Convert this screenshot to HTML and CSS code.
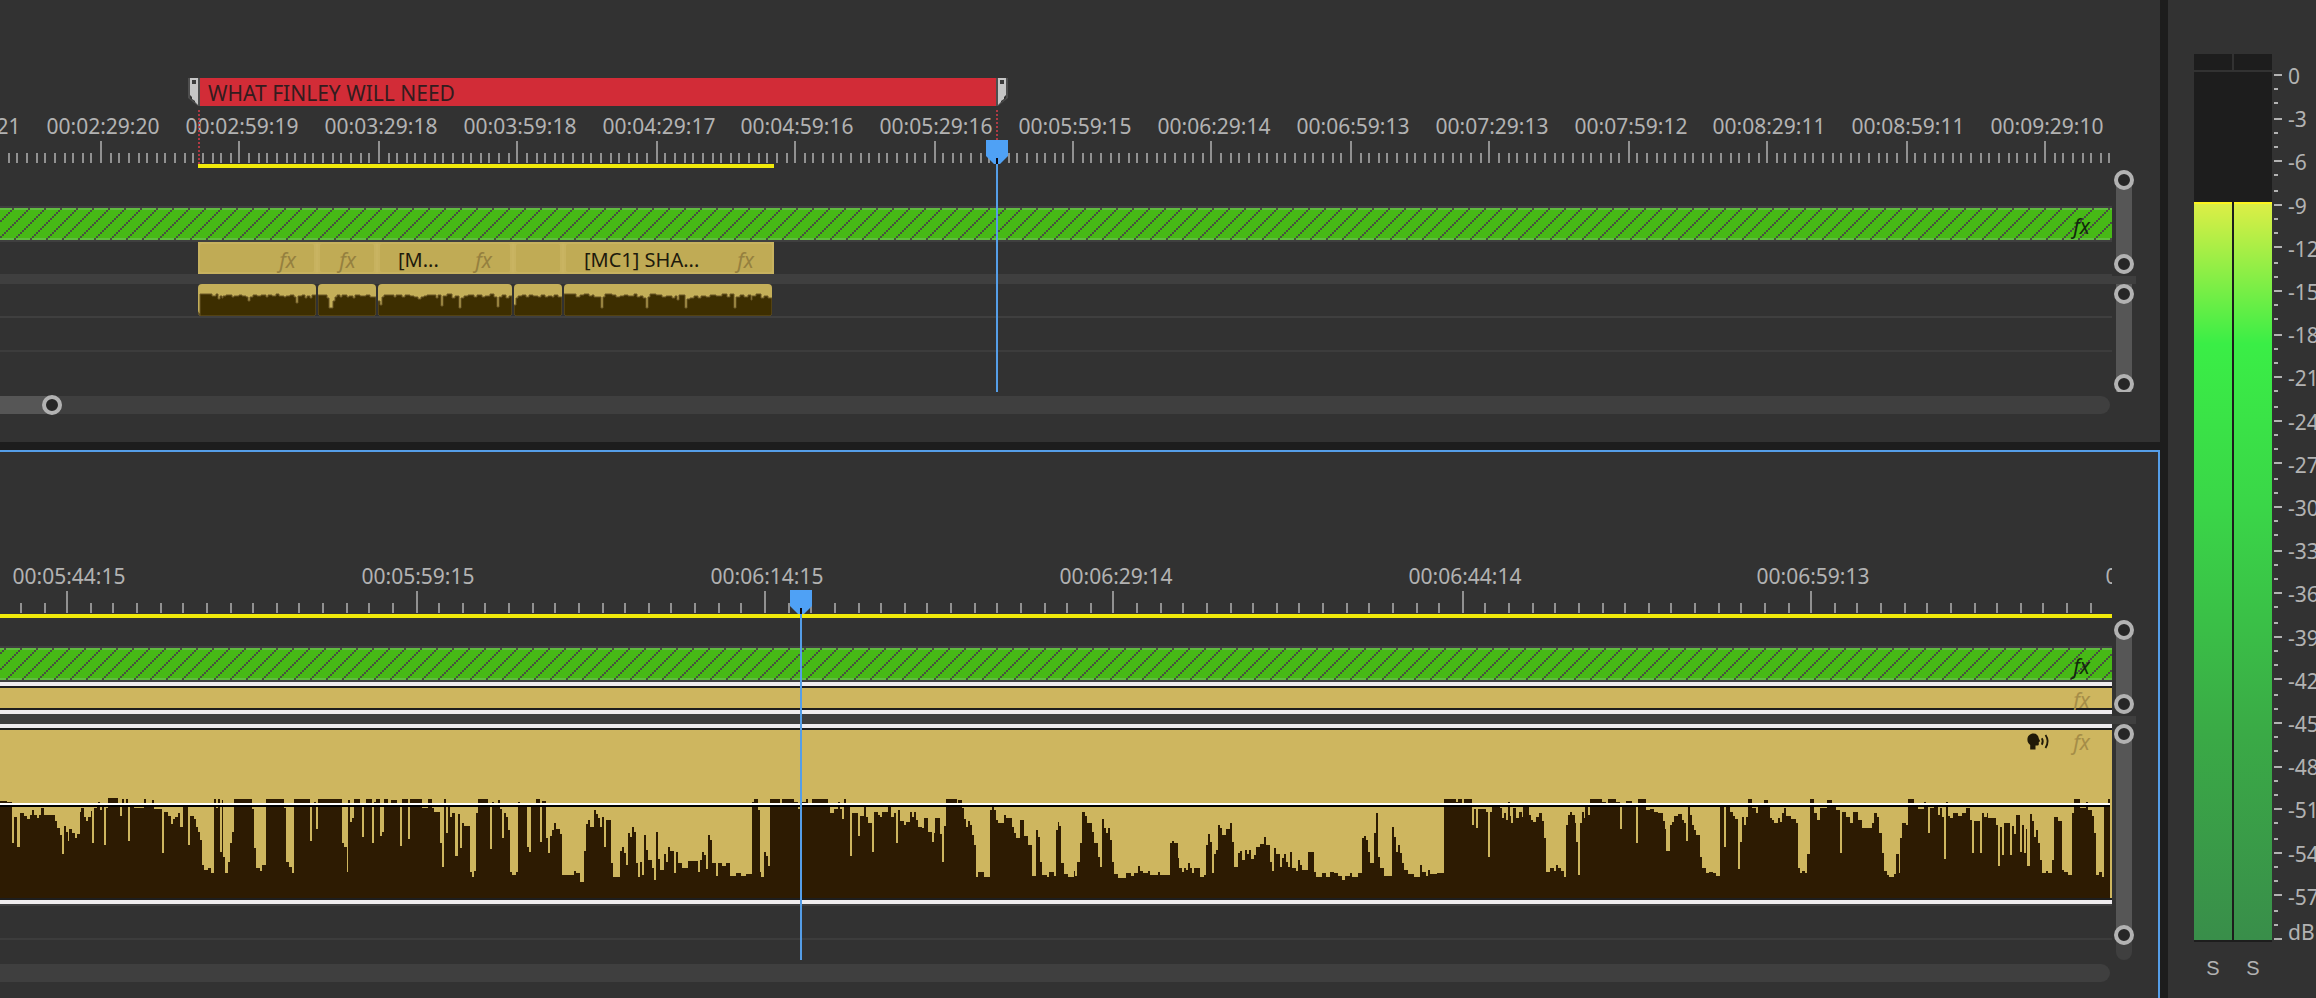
FILE: index.html
```html
<!DOCTYPE html>
<html lang="en">

<head>
    <meta charset="UTF-8">
    <meta name="viewport" content="width=device-width, initial-scale=1.0">
    <title>Timeline</title>
    <link rel="stylesheet" href="styles.css">
</head>

<body>
    <!-- shared hatch for the adjustment layers -->
    <svg class="defs" width="0" height="0" aria-hidden="true">
        <defs>
            <pattern id="hatch-source" width="16" height="32" patternUnits="userSpaceOnUse" x="12">
                <path d="M0 0h2v2h-2zM14 2h2v2h-2zM12 4h2v2h-2zM10 6h2v2h-2zM8 8h2v2h-2zM6 10h2v2h-2zM4 12h2v2h-2zM2 14h2v2h-2zM0 16h2v2h-2zM14 18h2v2h-2zM12 20h2v2h-2zM10 22h2v2h-2zM8 24h2v2h-2zM6 26h2v2h-2zM4 28h2v2h-2zM2 30h2v2h-2z" />
            </pattern>
            <pattern id="hatch-edit" width="16" height="32" patternUnits="userSpaceOnUse" x="4">
                <path d="M0 0h2v2h-2zM14 2h2v2h-2zM12 4h2v2h-2zM10 6h2v2h-2zM8 8h2v2h-2zM6 10h2v2h-2zM4 12h2v2h-2zM2 14h2v2h-2zM0 16h2v2h-2zM14 18h2v2h-2zM12 20h2v2h-2zM10 22h2v2h-2zM8 24h2v2h-2zM6 26h2v2h-2zM4 28h2v2h-2zM2 30h2v2h-2z" />
            </pattern>
        </defs>
    </svg>

    <main class="workspace">
        <div class="timelines">

            <!-- Source timeline -->
            <section class="panel">
                <div class="lanes">
                    <div class="marker-lane">
                        <svg class="marker-end" viewBox="0 0 12 28">
                            <path class="edge" d="M0 0h2v20l8 7v-27h2v28h-2l-10-8z" />
                            <path class="flag" d="M2 0h8v27l-3-3v-1l-3-2v-2l-2-2z" />
                            <path class="hole" d="M4 2h4v4h-4z" />
                        </svg>
                        <div class="marker">WHAT FINLEY WILL NEED</div>
                        <svg class="marker-end right" viewBox="0 0 12 28">
                            <path class="edge" d="M0 0h2v20l8 7v-27h2v28h-2l-10-8z" />
                            <path class="flag" d="M2 0h8v27l-3-3v-1l-3-2v-2l-2-2z" />
                            <path class="hole" d="M4 2h4v4h-4z" />
                        </svg>
                        <i class="marker-drop in"></i>
                        <i class="marker-drop out"></i>
                    </div>
                    <div class="ruler" id="source-ruler"></div>
                    <div class="work-area part"></div>

                    <div class="video-tracks">
                        <div class="adjustment">
                            <svg width="100%" height="32"><rect width="100%" height="32" fill="url(#hatch-source)" /></svg>
                            <span class="fx">fx</span>
                        </div>
                        <div class="clips">
                            <div class="clip c1"><span class="fx">fx</span></div>
                            <div class="clip c2"><span class="fx">fx</span></div>
                            <div class="clip c3"><span class="name">[M...</span><span class="fx">fx</span></div>
                            <div class="clip c4"></div>
                            <div class="clip c5"><span class="name">[MC1] SHA...</span><span class="fx">fx</span></div>
                        </div>
                    </div>
                    <div class="splitter"></div>
                    <div class="clips audio">
                        <div class="clip c1">
                            <svg viewBox="0 0 118 32">
                                <path d="M2 32V10H14V12H18V10H20V15H22V12H24V14H25V12H28V11H34V13H36V12H41V11H44V12H48V13H50V17H52V13H55V11H59V12H63V11H68V13H70V11H74V12H78V10H81V12H86V13H88V12H92V11H96V13H98V19H100V12H104V11H107V14H109V12H112V14H114V11H118V32z" />
                            </svg>
                        </div>
                        <div class="clip c2">
                            <svg viewBox="0 0 58 32">
                                <path d="M0 32V11H9V14H11V24H15V17H17V13H19V11H22V13H24V11H29V13H31V12H35V14H37V11H42V12H48V11H52V13H58V32z" />
                            </svg>
                        </div>
                        <div class="clip c3">
                            <svg viewBox="0 0 134 32">
                                <path d="M0 32V17H2V21H4V13H6V11H16V13H18V11H24V13H27V11H32V12H36V13H40V15H43V13H46V12H49V11H58V14H60V11H63V22H65V12H69V10H74V14H77V12H81V24H83V14H86V12H90V11H96V13H99V11H104V13H107V12H112V10H116V13H119V23H121V13H124V11H128V14H131V12H134V32z" />
                            </svg>
                        </div>
                        <div class="clip c4">
                            <svg viewBox="0 0 48 32">
                                <path d="M0 32V21H2V14H4V12H8V11H12V13H15V11H19V12H24V13H27V11H31V13H34V12H38V13H40V11H44V13H48V32z" />
                            </svg>
                        </div>
                        <div class="clip c5">
                            <svg viewBox="0 0 208 32">
                                <path d="M0 32V10H12V13H16V11H20V10H25V12H28V11H30V13H37V24H39V13H41V10H48V11H52V13H56V12H60V11H64V12H70V10H73V13H76V12H79V14H82V24H84V13H86V10H92V11H98V13H102V12H108V14H111V12H113V16H115V11H121V24H123V15H126V14H130V12H134V14H137V12H142V13H146V11H152V12H158V10H163V13H166V10H170V24H172V13H176V11H180V13H184V11H187V16H188V12H192V10H197V14H200V12H204V14H208V32z" />
                            </svg>
                        </div>
                    </div>
                    <div class="empty-track"></div>

                    <div class="playhead at-source">
                        <svg viewBox="0 0 22 24"><path d="M0 0H22V16L14 24H8L0 16z" /><path class="slot" d="M10 18h2v6h-2z" /></svg>
                    </div>
                </div>
                <div class="zoom-bars">
                    <div class="vbar"><button class="knob" aria-label="Video tracks top"></button><button class="knob" aria-label="Video tracks bottom"></button></div>
                    <div class="splitter"></div>
                    <div class="vbar cut"><button class="knob" aria-label="Audio tracks top"></button><button class="knob" aria-label="Audio tracks bottom"></button></div>
                </div>
                <div class="hbar"><div class="thumb"><button class="knob" aria-label="Zoom timeline"></button></div></div>
            </section>

            <!-- Sequence timeline -->
            <section class="panel active">
                <div class="lanes">
                    <div class="ruler" id="edit-ruler"></div>
                    <div class="work-area"></div>

                    <div class="video-tracks short">
                        <div class="adjustment">
                            <svg width="100%" height="32"><rect width="100%" height="32" fill="url(#hatch-edit)" /></svg>
                            <span class="fx">fx</span>
                        </div>
                        <div class="selected video"><span class="fx">fx</span></div>
                    </div>
                    <div class="splitter"></div>
                    <div class="selected sound">
                        <svg class="wave" viewBox="0 0 2112 168" preserveAspectRatio="none" shape-rendering="crispEdges">
                            <path transform="translate(0 -180) scale(.4975 .3333)" d="M0 1044V752H14V757H24V880H28V800H34V890H40V790H48V798H55V808H60V795H65V780H68V795H74V803H78V795H82V775H88V795H110V812H115V835H120V855H124V912H129V828H133V845H136V872H139V838H144V850H150V865H155V853H160V785H163V775H168V800H172V812H176V800H182V782H185V880H189V775H194V765H197V757H201V780H205V766H209V886H213V775H217V745H238V765H241V797H245V748H249V765H253V748H257V872H261V770H270V774H289V748H293V770H306V750H310V778H325V910H330V785H338V797H343V822H347V808H351V800H358V788H362V830H367V760H378V886H382V797H390V808H394V830H398V845H402V870H406V945H411V960H418V955H424V968H430V748H434V775H438V748H442V905H446V750H449V920H453V970H458V935H462V880H466V845H470V746H507V778H511V895H515V955H523V962H527V946H535V746H571V775H575V935H581V950H586V970H591V746H623V872H627V765H631V757H635V838H639V746H688V880H692V890H697V965H700V750H704V815H708V805H712V746H724V765H728V860H732V770H736V746H748V880H752V757H756V746H764V857H768V845H772V746H780V765H785V750H797V770H804V888H808V746H820V868H824V746H848V775H860V748H868V775H872V785H884V880H889V952H893V748H897V850H901V772H905V800H909V788H915V917H921V793H925V893H929V820H933V828H944V965H948V980H953V962H957V790H961V748H980V765H985V898H989V755H993V768H1001V750H1005V778H1009V863H1013V790H1017V800H1021V840H1025V965H1029V976H1037V965H1041V757H1045V772H1060V890H1064V905H1068V765H1077V748H1085V875H1089V752H1097V865H1101V910H1105V857H1109V840H1113V820H1118V838H1125V853H1130V975H1153V962H1158V970H1166V995H1174V903H1178V822H1182V810H1186V830H1194V780H1198V793H1202V803H1206V832H1210V800H1214V892H1218V810H1229V940H1233V980H1246V903H1250V890H1254V910H1258V945H1262V850H1266V860H1270V830H1274V845H1279V940H1283V980H1287V935H1291V975H1295V855H1299V900H1303V930H1311V955H1315V990H1319V847H1323V928H1327V960H1335V912H1339V935H1343V890H1347V903H1355V968H1359V905H1363V940H1371V955H1383V932H1403V965H1407V930H1411V907H1415V915H1419V958H1423V855H1427V870H1431V938H1439V977H1443V938H1451V948H1459V940H1467V977H1480V968H1490V978H1500V972H1511V757H1516V746H1524V780H1528V1044z" />
                            <path transform="translate(760 -180) scale(.4975 .3333)" d="M0 1044V965H3V980H8V907H12V917H16V947H20V746H40V765H44V746H68V757H76V778H80V757H92V746H96V770H105V746H136V765H141V790H149V778H156V757H160V778H164V808H169V746H173V772H181V917H185V790H197V857H201V797H209V768H213V800H217V820H225V905H229V785H237V795H241V802H245V785H257V772H264V800H269V790H274V880H277V780H281V812H289V825H294V815H302V785H306V800H309V785H313V810H317V830H325V835H330V805H337V845H345V875H349V850H352V803H362V853H365V935H370V827H374V746H395V765H398V750H406V775H410V808H415V830H418V812H422V825H427V855H430V885H434V980H439V965H450V980H462V780H466V772H470V780H474V810H478V820H490V795H494V805H506V830H510V850H514V863H522V810H530V857H538V885H546V978H554V840H558V860H562V935H567V975H577V980H580V965H590V978H595V840H598V815H602V828H606V940H611V972H620V980H631V962H634V978H638V935H643V880H647V785H654V797H658V820H668V845H671V880H679V922H683V952H687V808H691V835H695V850H699V835H703V870H707V935H711V972H720V984H735V968H745V978H752V968H760V948H764V962H770V970H779V962H784V975H800V965H805V975H824V880H828V872H832V880H840V925H843V955H848V965H852V955H857V960H861V940H865V955H869V970H873V955H885V980H893V975H897V885H901V853H905V875H909V970H913V912H917V900H921V825H925V835H929V855H937V838H945V818H949V875H953V950H961V910H965V903H969V930H974V900H978V912H982V900H986V928H993V915H997V890H1005V882H1013V860H1017V885H1025V935H1029V962H1033V895H1037V912H1045V950H1049V925H1053V912H1057V935H1061V950H1065V905H1069V955H1077V962H1081V930H1086V945H1090V960H1102V905H1114V965H1118V980H1130V968H1138V980H1146V965H1154V970H1162V978H1170V990H1175V978H1185V970H1190V980H1202V968H1210V865H1214V857H1218V870H1222V905H1226V938H1234V850H1238V790H1242V922H1246V955H1254V978H1270V830H1274V860H1278V905H1282V885H1286V910H1291V940H1295V960H1303V972H1315V980H1327V945H1331V965H1339V978H1343V960H1347V972H1360V968H1375V746H1399V757H1403V746H1411V760H1415V746H1431V825H1435V778H1439V835H1443V778H1460V785H1464V922H1467V785H1471V765H1487V1044z" />
                            <path transform="translate(1500 -180) scale(.4337 .3333)" d="M0 1044V775H5V805H10V790H14V810H18V757H22V797H26V820H30V775H38V803H43V785H50V800H54V772H68V795H72V810H77V815H82V800H90V790H96V812H101V865H105V965H115V955H124V962H129V945H133V955H140V962H147V980H152V825H156V795H161V785H166V795H173V820H176V875H180V976H184V820H188V785H193V803H197V768H202V795H207V746H235V757H245V770H249V746H268V757H277V838H281V765H290V752H304V770H313V880H318V746H337V780H345V778H355V785H364V790H375V812H380V838H383V903H392V825H397V815H402V797H410V793H419V810H424V820H429V873H433V770H438V795H442V825H447V840H452V855H461V920H466V955H475V968H482V965H490V970H498V978H507V770H517V890H521V770H530V785H537V797H542V808H549V958H553V877H558V800H563V825H567V800H572V746H581V775H590V790H595V772H608V750H617V768H622V803H627V810H632V820H640V805H645V815H650V790H655V775H660V797H670V808H682V820H686V955H691V970H697V962H703V970H709V912H715V746H724V790H730V810H738V775H755V750H766V765H775V780H784V910H788V785H797V800H807V820H815V785H825V810H835V835H857V820H862V790H870V800H875V850H880V910H885V962H893V975H898V982H908V972H914V912H919V968H922V865H928V818H935V825H940V746H954V770H963V778H977V757H982V770H987V850H992V775H1000V768H1010V795H1014V775H1019V800H1024V928H1028V755H1033V797H1037V803H1045V790H1056V797H1065V790H1074V775H1083V810H1088V908H1093V812H1107V910H1111V790H1116V800H1122V790H1125V803H1143V825H1148V948H1152V830H1157V915H1162V818H1176V915H1180V828H1185V853H1190V795H1199V905H1204V825H1208V910H1213V838H1215V948H1222V793H1227V812H1231V860H1236V840H1241V878H1245V930H1250V970H1258V962H1264V970H1273V930H1277V800H1287V812H1296V960H1300V965H1310V975H1319V790H1324V746H1337V775H1351V755H1356V780H1365V797H1370V850H1374V975H1380V965H1387V980H1393V770H1402V746H1407V1044z" />
                            <!-- gain line -->
                            <path class="gain" d="M0 73H2110V75H0z" />
                            <path class="gain-shadow" d="M0 75H2110V77H0z" />
                        </svg>
                        <div class="badges">
                            <svg class="voice" viewBox="0 0 24 18">
                                <path d="M6.500 0.500C9.500 .5 11.500 2.500 11.800 5.500L13.200 8.200L11.800 9V11.500Q11.600 12.600 10.300 12.500L8.500 12.600V16.500H3.200V12C1.200 10.600 .4 8.800 .4 6.500C.4 3 3 .5 6.500 .5z" />
                                <path class="sound-line" d="M14.800 5.200Q16.800 8.200 14.800 11.800M18.500 2Q22.800 8 18.500 15" />
                            </svg>
                            <span class="fx">fx</span>
                        </div>
                    </div>
                    <div class="empty-track tall"></div>

                    <div class="playhead at-edit">
                        <svg viewBox="0 0 22 24"><path d="M0 0H22V16L14 24H8L0 16z" /><path class="slot" d="M10 18h2v6h-2z" /></svg>
                    </div>
                </div>
                <div class="zoom-bars">
                    <div class="vbar"><button class="knob" aria-label="Video tracks top"></button><button class="knob" aria-label="Video tracks bottom"></button></div>
                    <div class="splitter"></div>
                    <div class="vbar tail"><button class="knob" aria-label="Audio tracks top"></button><button class="knob" aria-label="Audio tracks bottom"></button></div>
                    <div class="vbar-end"></div>
                </div>
                <div class="hbar"></div>
            </section>
        </div>

        <!-- Audio meters -->
        <aside class="meters">
            <div class="meter-body">
                <div class="channels">
                    <div class="peaks"><i></i><i></i></div>
                    <div class="levels">
                        <div class="level" style="height: 85%"></div>
                        <div class="level" style="height: 85%"></div>
                    </div>
                </div>
                <svg class="db-ticks" id="db-ticks" viewBox="0 0 8 866"></svg>
                <ul class="db-scale" id="db-scale"></ul>
            </div>
            <div class="solo">
                <button aria-label="Solo left">S</button>
                <button aria-label="Solo right">S</button>
            </div>
        </aside>
    </main>

    <script>
        const sourceTimes = ['00:01:59:21', '00:02:29:20', '00:02:59:19', '00:03:29:18', '00:03:59:18',
            '00:04:29:17', '00:04:59:16', '00:05:29:16', '00:05:59:15', '00:06:29:14', '00:06:59:13',
            '00:07:29:13', '00:07:59:12', '00:08:29:11', '00:08:59:11', '00:09:29:10'];
        const editTimes = ['00:05:44:15', '00:05:59:15', '00:06:14:15', '00:06:29:14', '00:06:44:14',
            '00:06:59:13', '00:07:14:13'];

        // start = x of the first timecode, step = distance between two timecodes
        function drawRuler(id, times, start, step) {
            const ruler = document.getElementById(id);
            const end = 2112;
            let d = '';
            for (let i = -30; ; i++) {
                // ticks sit on even pixels
                const x = Math.round((start + i * step / 15) / 2) * 2;
                if (x >= end) break;
                if (x < 0) continue;
                d += i % 15 === 0 ? `M${x} 0h2v22h-2z` : `M${x} 12h2v10h-2z`;
            }
            times.forEach((time, i) => {
                const label = document.createElement('span');
                label.className = 'timecode';
                label.style.left = Math.round(start + i * step + 3) + 'px';
                label.innerText = time;
                ruler.appendChild(label);
            });
            ruler.insertAdjacentHTML('beforeend',
                `<svg class="ticks" width="100%" height="22"><path d="${d}"/></svg>`);
        }

        drawRuler('source-ruler', sourceTimes, -38.8, 138.86);
        drawRuler('edit-ruler', editTimes, 66.4, 348.8);

        // Decibel scale, 0 to -60
        const scale = document.getElementById('db-scale');
        let marks = '';
        for (let db = 0; db <= 60; db++) {
            const y = Math.round(db * 14.4 / 2) * 2;
            marks += `M0 ${y}h${db % 3 === 0 ? 8 : 4}v2h-${db % 3 === 0 ? 8 : 4}z`;
            if (db % 3 === 0) {
                const li = document.createElement('li');
                li.innerText = db === 60 ? 'dB' : db === 0 ? '0' : '-' + db;
                scale.appendChild(li);
            }
        }
        document.getElementById('db-ticks').innerHTML = `<path d="${marks}"/>`;
    </script>
</body>

</html>
```

FILE: styles.css
```css
* {
    box-sizing: border-box;
}

body {
    margin: 0;
    background-color: #1d1d1d;
    color: #b2b2b2;
    font-family: "Noto Sans", "Open Sans", sans-serif;
    font-size: 21px;
    line-height: 28px;
    overflow: hidden;
}

button {
    border: none;
    padding: 0;
    background: none;
    color: inherit;
    cursor: pointer;
}

svg {
    display: block;
}

.defs {
    position: absolute;
}

.defs path {
    fill: #47513f;
}

.workspace {
    display: grid;
    grid-template-columns: minmax(0, 1fr) 148px;
    gap: 8px;
    min-height: 100vh;
}

.timelines {
    display: flex;
    flex-direction: column;
    gap: 8px;
}

/* Timeline panels */
.panel {
    display: grid;
    grid-template-columns: minmax(0, 1fr) 48px;
    align-content: start;
    padding: 78px 0 28px;
    background-color: #323232;
}

.panel.active {
    flex: 1;
    padding: 104px 0 0;
    border-top: 2px solid #559ee8;
    box-shadow: inset -2px 0 #559ee8;
}

.lanes {
    position: relative;
    overflow: hidden;
    padding-bottom: 44px;
}

.active .lanes {
    padding-bottom: 24px;
}

/* Markers */
.marker-lane {
    display: flex;
    height: 28px;
    padding-left: 188px;
}

.marker {
    width: 796px;
    padding-left: 8px;
    background-color: #d22c37;
    color: #331c1e;
    line-height: 30px;
    white-space: nowrap;
}

.marker-end {
    width: 12px;
    height: 28px;
}

.marker-end.right {
    transform: scaleX(-1);
}

.marker-end .edge {
    fill: #4e4e4e;
}

.marker-end .flag {
    fill: #c6c6c6;
}

.marker-end .hole {
    fill: #3c3c3c;
}

.marker-drop {
    position: absolute;
    top: 32px;
    left: 198px;
    width: 2px;
    height: 54px;
    background: repeating-linear-gradient(#b03a44 0 2px, transparent 2px 4px);
    z-index: 1;
}

.marker-drop.out {
    left: 996px;
    height: 30px;
}

/* Ruler */
.ruler {
    position: relative;
    height: 58px;
    padding-top: 35px;
}

.timecode {
    position: absolute;
    top: 6px;
    transform: translateX(-50%);
}

.ticks path {
    fill: #919191;
}

.work-area {
    height: 4px;
    background-color: #f0ea0a;
}

.work-area.part {
    width: 576px;
    margin-left: 198px;
}

/* Tracks */
.video-tracks {
    padding-top: 38px;
}

.video-tracks.short {
    padding-top: 28px;
}

.adjustment {
    position: relative;
    border-top: 2px solid #3f3f3f;
    border-bottom: 2px solid #3f3f3f;
    background: linear-gradient(#60bd40 2px, #47b916 2px 30px, #60bd40 30px);
}

.adjustment .fx {
    position: absolute;
    top: 4px;
    right: 22px;
    color: #12280c;
}

.fx {
    color: #95803f;
    font-style: italic;
}

.clips {
    display: flex;
    gap: 2px;
    height: 32px;
    padding-left: 198px;
    background: linear-gradient(90deg, transparent 198px, #c9b462 198px 774px, transparent 774px);
}

.clips.audio {
    height: 34px;
    background: none;
    border-bottom: 2px solid #3f3f3f;
}

.clip {
    display: flex;
    justify-content: flex-end;
    align-items: center;
    height: 32px;
    padding: 3px 18px 0 0;
    border: 2px solid #c7b25f;
    border-radius: 4px;
    background-color: #c0ab55;
}

.clip .name {
    flex: 1;
    padding-left: 18px;
    color: #1d1a0c;
    font-size: 20px;
    white-space: nowrap;
}

.c1 { width: 118px; }
.c2 { width: 58px; }
.c3 { width: 134px; }
.c4 { width: 48px; }
.c5 { width: 210px; }

.audio .c5 {
    width: 208px;
}

.audio .clip {
    display: block;
    padding: 0;
    border: none;
    overflow: hidden;
    background-color: #c4af59;
    box-shadow: inset 0 -2px #51421a;
}

.audio path {
    fill: #3d2e00;
    stroke: #6b5626;
    stroke-width: 1;
}

.splitter {
    height: 10px;
    background-color: #3f3f3f;
}

.empty-track {
    height: 34px;
    border-bottom: 2px solid #3c3c3c;
}

.empty-track.tall {
    height: 36px;
    border-top: 2px solid #3f3f3f;
}

.selected {
    position: relative;
    border-top: 4px solid #efecee;
    border-bottom: 4px solid #efecee;
    background-color: #ceb65f;
    box-shadow: inset 0 2px #1e1e1e, inset 0 -2px #1e1e1e;
}

.selected.video {
    display: flex;
    justify-content: flex-end;
    height: 32px;
    padding-right: 22px;
    overflow: hidden;
}

.selected.video .fx,
.badges .fx {
    color: #a58d48;
}

.selected.sound {
    height: 180px;
    padding: 2px 0;
}

.wave {
    width: 100%;
    height: 168px;
    fill: #2d1b02;
}

.gain {
    fill: #fff;
}

.gain-shadow {
    fill: #000;
}

.badges {
    position: absolute;
    top: 0;
    right: 22px;
    display: flex;
    align-items: center;
    gap: 22px;
}

.voice {
    width: 24px;
    height: 18px;
    fill: #211a08;
}

.voice .sound-line {
    fill: none;
    stroke: #211a08;
    stroke-width: 1.8;
}

/* Playhead */
.playhead {
    position: absolute;
    top: 62px;
    bottom: 4px;
    width: 22px;
    background: linear-gradient(90deg, transparent 10px, #559ee8 10px 12px, transparent 12px);
    z-index: 2;
}

.playhead path {
    fill: #4fa1f5;
}

.playhead .slot {
    fill: #0a0a14;
}

.at-source {
    left: 986px;
}

.at-edit {
    top: 34px;
    left: 790px;
}

/* Zoom bars */
.zoom-bars {
    display: flex;
    flex-direction: column;
    padding-top: 92px;
}

.active .zoom-bars {
    padding-top: 64px;
}

.zoom-bars .splitter {
    width: 24px;
    height: 8px;
    margin-top: 2px;
}

.vbar {
    display: flex;
    flex-direction: column;
    align-items: center;
    justify-content: space-between;
    width: 16px;
    height: 104px;
    margin-left: 4px;
    border-radius: 8px;
    background-color: #565656;
}

.active .vbar {
    height: 94px;
}

.vbar.cut {
    height: 108px;
    overflow: hidden;
    width: 20px;
    margin-left: 2px;
    border-radius: 0;
    background: linear-gradient(90deg, transparent 2px, #565656 2px 18px, transparent 18px);
}

.vbar.cut .knob:last-child {
    margin-bottom: -2px;
}

.active .vbar.tail {
    height: 221px;
}

.vbar-end {
    width: 16px;
    height: 23px;
    margin: -8px 0 0 4px;
    border-radius: 0 0 8px 8px;
    background-color: #3f3f3f;
}

.vbar.tail {
    position: relative;
    z-index: 1;
}

.knob {
    flex: none;
    width: 20px;
    height: 20px;
    border: 4px solid #b2b2b2;
    border-radius: 50%;
    background-color: #272727;
}

.hbar {
    height: 18px;
    margin-right: 2px;
    border-radius: 0 9px 9px 0;
    background-color: #3f3f3f;
}

.thumb {
    display: flex;
    justify-content: flex-end;
    align-items: center;
    width: 62px;
    height: 18px;
    border-radius: 0 9px 9px 0;
    background-color: #565656;
}

/* Audio meters */
.meters {
    display: flex;
    flex-direction: column;
    padding: 54px 0 0 26px;
    background-color: #323232;
    overflow: hidden;
}

.meter-body {
    display: flex;
    flex: 1;
}

.channels {
    display: flex;
    flex: none;
    flex-direction: column;
    gap: 2px;
    width: 78px;
}

.peaks {
    display: flex;
    gap: 2px;
    height: 16px;
}

.peaks i {
    flex: 1;
    background-color: #1d1d1d;
}

.levels {
    display: flex;
    align-items: flex-end;
    gap: 2px;
    flex: 1;
    padding-bottom: 2px;
    background-color: #1d1d1d;
}

.level {
    flex: 1;
    border-top: 2px solid #fdf420;
    background: linear-gradient(#dcee46, #3aee46 19%, #3ad648 41%, #3aaa46 72%, #398e4a);
}

.db-ticks {
    flex: none;
    width: 8px;
    height: 866px;
    margin: 20px 0 0 2px;
    fill: #b2b2b2;
}

.db-scale {
    display: flex;
    flex-direction: column;
    height: 884px;
    margin: 8px 0 -8px 6px;
    padding: 0;
    list-style: none;
    white-space: nowrap;
}

.db-scale li {
    flex: 1;
}

.db-scale li:last-child {
    flex: none;
    height: 28px;
    margin-top: -8px;
}

.solo {
    display: flex;
    gap: 2px;
    width: 78px;
    height: 56px;
}

.solo button {
    flex: 1;
    padding-bottom: 4px;
    font-family: "Liberation Sans", sans-serif;
    font-size: 20px;
}
```
